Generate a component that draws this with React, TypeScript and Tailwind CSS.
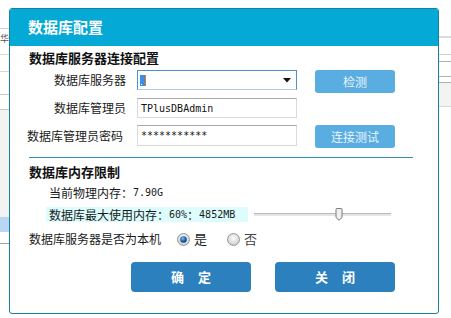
import React from "react";

const cjk = "font-['Noto_Sans_CJK_SC','Noto_Sans',sans-serif]";
const mono = "font-['DejaVu_Sans_Mono','Liberation_Mono',monospace] text-[10px]";

function Radio({ checked }: { checked: boolean }) {
  return (
    <svg width="13" height="13" viewBox="0 0 13 13">
      <defs>
        <radialGradient id={checked ? "rc" : "ru"} cx="50%" cy="40%" r="60%">
          <stop offset="0%" stopColor="#ffffff" />
          <stop offset="100%" stopColor="#c9c9c9" />
        </radialGradient>
        <radialGradient id="dot" cx="40%" cy="35%" r="70%">
          <stop offset="0%" stopColor="#6fc3f5" />
          <stop offset="60%" stopColor="#1a5fa8" />
          <stop offset="100%" stopColor="#0b3466" />
        </radialGradient>
      </defs>
      <circle cx="6.5" cy="6.5" r="6" fill={`url(#${checked ? "rc" : "ru"})`} stroke="#9a9a9a" strokeWidth="1" />
      {checked && <circle cx="6.5" cy="6.5" r="3.3" fill="url(#dot)" />}
    </svg>
  );
}

export default function App() {
  return (
    <div className={`relative w-[451px] h-[318px] bg-white overflow-hidden ${cjk}`}>
      {/* background window edges */}
      <div className="flex justify-between h-full">
        <div className="w-[10px] flex flex-col">
          <div className="h-[29px] border-b border-[#d0d0d0]" />
          <div className="h-[26px] border-b border-[#d8d8d8] text-[9px] leading-[20px] text-[#555] overflow-hidden">华</div>
          <div className="h-[17px] border-b border-[#d8d8d8]" />
          <div className="h-[23px] border-b border-[#c8c8c8]" />
          <div className="h-[15px] border-b border-[#c8c8c8]" />
          <div className="h-[72px] bg-[#f3f3f3] border-b border-[#f3f3f3]" />
          <div className="h-[35px] bg-[#f3f3f3]" />
          <div className="h-[15px] bg-[#b9d7f2]" />
          <div className="h-[12px] border-b border-[#a0a0a0]" />
        </div>
        <div className="w-[12px] flex flex-col">
          <div className="h-[38px] border-b-2 border-[#dcdcdc]" />
          <div className="h-[17px] border-b border-[#cfcfcf]" />
          <div className="h-[7px] border-b border-[#b0b0b0]" />
          <div className="h-[15px] border-b border-[#b0b0b0]" />
          <div className="h-[6px] border-b border-[#b0b0b0]" />
          <div className="h-[24px] bg-[#f3f3f3] border-b border-[#d8d8d8]" />
        </div>
      </div>

      {/* dialog */}
      <div className="absolute left-[9px] top-[8px] w-[430px] h-[306px] border border-[#197f9f] rounded-[3px] bg-white flex flex-col overflow-hidden">
        <div className="h-[37px] bg-[#04a9d6] flex items-center pl-[18px] shrink-0">
          <span className="text-white font-bold text-[15px]">数据库配置</span>
        </div>

        <div className="flex flex-col pl-[19px]">
          <div className="mt-[4px] text-[13px] leading-[16px] font-bold text-[#111]">数据库服务器连接配置</div>

          {/* row 1 */}
          <div className="flex items-start mt-[4px]">
            <div className="w-[97px] text-right text-[12px] leading-[20px] text-[#1a1a1a] whitespace-nowrap">数据库服务器</div>
            <div className="ml-[11px] w-[160px] h-[20px] border border-[#4f90c6] border-b-[#a9cbe6] bg-white flex items-center pl-[2px] pr-[5px]">
              <div className="w-[6px] h-[11px] bg-[#3b8fe6] border-r border-[#e07a1a] flex items-end pl-[1px]">
                <div className="w-[1px] h-[1px] bg-white mb-[1px]" />
              </div>
              <div className="flex-1" />
              <svg width="8" height="5" viewBox="0 0 8 5">
                <path d="M0 0H8L4 4.5Z" fill="#111" />
              </svg>
            </div>
            <button className="ml-[18px] w-[80px] h-[23px] rounded-[3px] bg-[#5aade1] text-[#e8f4fc] text-[12px] leading-[23px]">检测</button>
          </div>

          {/* row 2 */}
          <div className="flex items-start mt-[5px]">
            <div className="w-[97px] text-right text-[12px] leading-[20px] text-[#1a1a1a] whitespace-nowrap">数据库管理员</div>
            <div className="ml-[11px] w-[160px] h-[20px] border border-[#dadada] border-t-[#a8a8a8] bg-white flex items-center pl-[3px]">
              <span className={`${mono} text-[#111]`}>TPlusDBAdmin</span>
            </div>
          </div>

          {/* row 3 */}
          <div className="flex items-start mt-[7px]">
            <div className="w-[94px] text-[12px] leading-[21px] text-[#1a1a1a] whitespace-nowrap flex justify-end">
              <span>数据库管理员密码</span>
            </div>
            <div className="ml-[14px] w-[160px] h-[21px] border border-[#dadada] border-t-[#a8a8a8] bg-white flex items-center pl-[3px]">
              <span className={`${mono} text-[#111]`}>***********</span>
            </div>
            <button className="ml-[18px] w-[80px] h-[23px] rounded-[3px] bg-[#5aade1] text-[#e8f4fc] text-[12px] leading-[23px]">连接测试</button>
          </div>

          {/* separator */}
          <div className="mt-[9px] w-[384px] h-[1px] bg-[#2e93b6]" />

          <div className="mt-[6px] text-[13px] leading-[16px] font-bold text-[#111]">数据库内存限制</div>

          <div className="mt-[5px] pl-[20px] text-[12px] leading-[16px] text-[#1a1a1a] flex items-center">
            <span>当前物理内存：</span>
            <span className={mono}>7.90G</span>
          </div>

          <div className="mt-[6px] flex items-center h-[15px]">
            <div className="ml-[17px] w-[202px] h-[15px] bg-[#dcfcfe] flex items-center pl-[3px] text-[12px] text-[#1a1a1a] whitespace-nowrap">
              <span>数据库最大使用内存：</span>
              <span className={mono}>60%</span>
              <span>：</span>
              <span className={mono}>4852MB</span>
            </div>
            <div className="ml-[6px] w-[137px] h-[15px] flex items-center relative">
              <div className="w-full h-[3px] bg-[#e6e6e6] border-t border-[#b9b9b9]" />
              <svg className="absolute left-[81px] top-[1px]" width="8" height="13" viewBox="0 0 8 13">
                <path d="M1 1.5Q1 0.5 2 0.5H6Q7 0.5 7 1.5V9.5L4 12.3L1 9.5Z" fill="#f0f0f0" stroke="#7a7a7a" strokeWidth="1" />
              </svg>
            </div>
          </div>

          <div className="mt-[9px] flex items-center h-[16px] text-[12px] text-[#1a1a1a]">
            <span className="w-[148px]">数据库服务器是否为本机</span>
            <Radio checked />
            <span className="ml-[4px] text-[13px]">是</span>
            <div className="ml-[20px]"><Radio checked={false} /></div>
            <span className="ml-[4px] text-[13px] text-[#444]">否</span>
          </div>

          <div className="mt-[15px] flex pl-[102px] gap-[24px]">
            <button className="w-[120px] h-[30px] rounded-[4px] bg-[#2d80be] text-white text-[13px] font-bold tracking-[14px] pl-[14px]">确定</button>
            <button className="w-[120px] h-[30px] rounded-[4px] bg-[#2d80be] text-white text-[13px] font-bold tracking-[14px] pl-[14px]">关闭</button>
          </div>
        </div>
      </div>
    </div>
  );
}
